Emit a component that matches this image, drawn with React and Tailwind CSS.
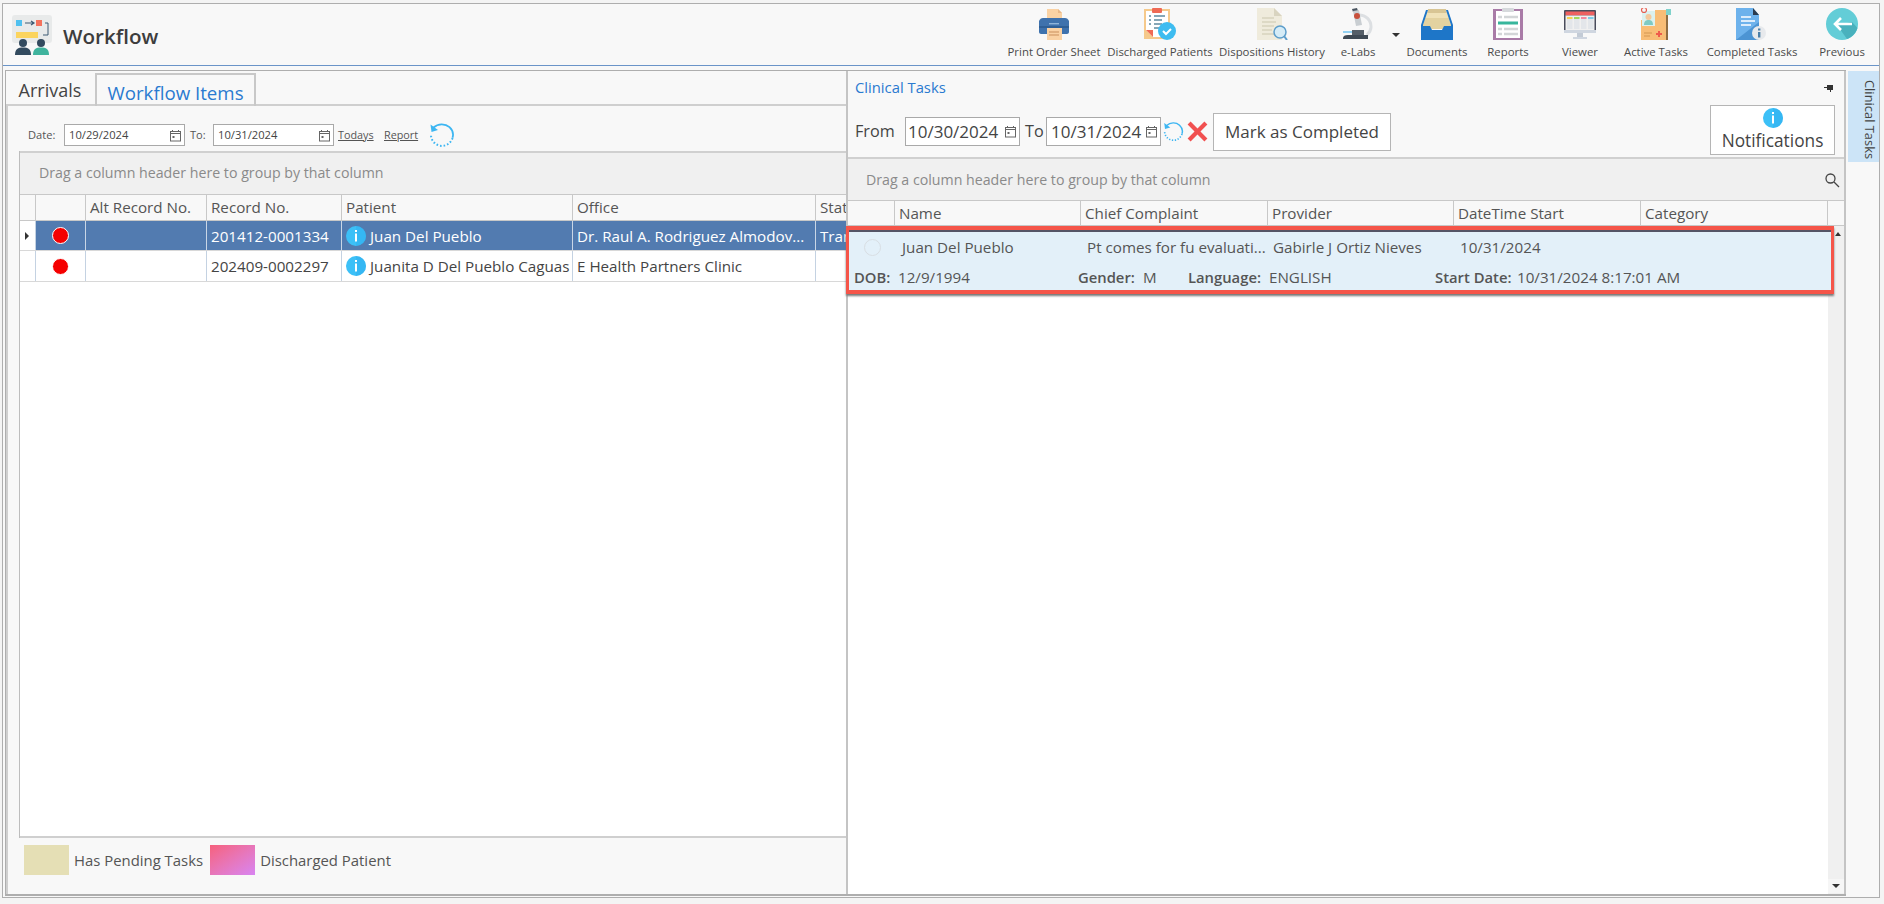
import React from "react";

const Cal = ({ s = 13 }) => (
  <svg width={s} height={s} viewBox="0 0 13 13" fill="none" stroke="#666" strokeWidth="1" className="shrink-0">
    <rect x="1.5" y="2.5" width="10" height="9.5" />
    <path d="M1.5 4.5h10M3.5 1v2M9.5 1v2" />
    <rect x="3.5" y="7" width="2" height="2" fill="#666" stroke="none" />
  </svg>
);

const Refresh = ({ s = 26 }) => (
  <svg width={s} height={s} viewBox="0 0 26 26" fill="none">
    <path d="M4.5 5.5C9 1.5 16 1.2 20.5 5.2c3.2 3 4 7.5 3 10.5" stroke="#3db6f2" strokeWidth="1.8" />
    <path d="M1.5 2.5l1 7.5 6.5-2z" fill="#3db6f2" />
    <path d="M23.6 16C21.5 22 15.5 25 10 23.5 5.5 22.2 2 18 2 13" stroke="#3db6f2" strokeWidth="2" strokeDasharray="1.6 2" />
  </svg>
);

const Info = ({ s = 20 }) => (
  <svg width={s} height={s} viewBox="0 0 20 20" className="shrink-0">
    <circle cx="10" cy="10" r="10" fill="#3cc0f7" />
    <path d="M10 0a10 10 0 0 1 0 20z" fill="#2eaeef" opacity=".5" />
    <rect x="9" y="4" width="2" height="2" fill="#fff" />
    <rect x="9" y="7.5" width="2" height="8" fill="#fff" />
  </svg>
);

const Logo = () => (
  <svg width="40" height="42" viewBox="0 0 40 42">
    <rect x="0" y="0" width="40" height="28" rx="3" fill="#e8eaea" />
    <rect x="4" y="5" width="6" height="6" fill="#4fc0ef" />
    <rect x="24" y="5" width="6" height="6" fill="#f4725c" />
    <path d="M13 8h8M19 6l3 2-3 2" stroke="#3d5a73" strokeWidth="1.2" fill="none" />
    <path d="M33 8h3v12h-5" stroke="#3d5a73" strokeWidth="1" fill="none" />
    <rect x="4" y="17" width="22" height="6" fill="#fbd45e" />
    <circle cx="11" cy="28" r="4" fill="#324a5e" />
    <path d="M3 40c0-6 3-7.500 8-7.500s8 1.500 8 7.500z" fill="#324a5e" />
    <circle cx="29" cy="28" r="4" fill="#324a5e" />
    <path d="M21 40c0-6 3-7.500 8-7.500s8 1.500 8 7.500z" fill="#3fb39d" />
  </svg>
);

const I = {
  print: (
    <svg width="32" height="32" viewBox="0 0 32 32">
      <path d="M9 1h11l4 4v9H9z" fill="#fad2a4" />
      <path d="M20 1l4 4h-4z" fill="#e9b887" />
      <path d="M5 10h22c2 0 3 1 4 3v11c0 1-1 2-2 2H3c-1 0-2-1-2-2V13c1-2 2-3 4-3z" fill="#3f72ad" />
      <rect x="1" y="18" width="30" height="2" fill="#2f5f96" />
      <rect x="11" y="15" width="10" height="1.400" fill="#8fb4da" />
      <rect x="9" y="20" width="15" height="12" fill="#fad2a4" />
      <path d="M11 24h10M11 27h10" stroke="#c98f5d" strokeWidth="1" />
    </svg>
  ),
  disch: (
    <svg width="32" height="32" viewBox="0 0 32 32">
      <rect x="0" y="1" width="26" height="30" fill="#f5c98b" />
      <path d="M2 3h22v26H9l-7-7z" fill="#fff" />
      <path d="M2 22h7v7z" fill="#ef6a55" />
      <rect x="8" y="0" width="10" height="5" rx="1" fill="#ef6a55" />
      <path d="M10 8h11M10 12h8M10 16h8M10 20h5" stroke="#5f8aa0" strokeWidth="1.500" />
      <path d="M5 8h2M5 12h2M5 16h2" stroke="#5f8aa0" strokeWidth="1.500" />
      <circle cx="23" cy="23" r="9" fill="#3ebcf0" />
      <path d="M19 23l3 3 5-5" stroke="#fff" strokeWidth="2" fill="none" />
    </svg>
  ),
  disp: (
    <svg width="32" height="32" viewBox="0 0 32 32">
      <path d="M1 0h17l8 8v24H1z" fill="#efebdc" />
      <path d="M18 0l8 8h-8z" fill="#d9d4c0" />
      <path d="M6 10h12M6 14h14M6 18h12M6 22h10M6 26h14" stroke="#d8d3bd" strokeWidth="1.400" />
      <circle cx="24" cy="24" r="6" fill="#d5ecf7" stroke="#5d9ecb" strokeWidth="1.500" />
      <path d="M28 28l3 4" stroke="#5d9ecb" strokeWidth="2" />
    </svg>
  ),
  labs: (
    <svg width="32" height="32" viewBox="0 0 32 32">
      <path d="M17 7c7 0 12 5 12 12 0 4-2 6-4 8" stroke="#dcdfe2" strokeWidth="3" fill="none" />
      <path d="M10 1l5-1 1 3-5 1z" fill="#4a5560" />
      <path d="M11 3l6-1 3 15-6 1z" fill="#c9ced2" />
      <circle cx="15" cy="8" r="3" fill="#c8503c" />
      <path d="M1 24h10" stroke="#4fb7ee" strokeWidth="1.200" />
      <path d="M6 27h20v4H1v-1c0-2 2-3 5-3z" fill="#3f4a55" />
      <rect x="10" y="22" width="12" height="5" fill="#555f69" />
    </svg>
  ),
  docs: (
    <svg width="32" height="32" viewBox="0 0 32 32">
      <path d="M7 1h18l3 14H4z" fill="#d8c594" />
      <path d="M5 5h22l3 14H2z" fill="#f0e2b8" />
      <path d="M4 10h24l3 11H1z" fill="#e3d2a0" />
      <path d="M5 2h2L2 17v14h28V17L25 2h2l5 15v15H0V17z" fill="#1e76c8" />
      <path d="M0 18h9l2 4h10l2-4h9v14H0z" fill="#1e76c8" />
    </svg>
  ),
  rep: (
    <svg width="32" height="32" viewBox="0 0 32 32">
      <rect x="1" y="1" width="30" height="31" fill="#a97ba7" />
      <rect x="4" y="3" width="24" height="27" fill="#fff" />
      <rect x="10" y="0" width="12" height="4" rx="1" fill="#d6d9dc" />
      <path d="M6 9h4M12 9h14M6 21h4M12 21h14M6 26h4M12 26h14" stroke="#d3d6d8" strokeWidth="2.500" />
      <rect x="6" y="13.500" width="20" height="3" fill="#37b69c" />
    </svg>
  ),
  view: (
    <svg width="32" height="32" viewBox="0 0 32 32">
      <rect x="0" y="2" width="32" height="22" rx="1" fill="#4a4d5c" />
      <rect x="1.500" y="3.500" width="29" height="4" fill="#ef6060" />
      <rect x="1.500" y="7.500" width="29" height="15" fill="#f0f0f0" />
      <path d="M3 9h5.500v12H3zM10 9h5.500v12H10zM17 9h5.500v12H17zM24 9h5.500v12H24z" fill="#e3e6ea" />
      <path d="M3 9h5.500v2H3z" fill="#f8d24f" />
      <path d="M10 9h5.500v2H10z" fill="#a6d75b" />
      <path d="M17 9h5.500v2H17z" fill="#f48aa0" />
      <path d="M24 9h5.500v2H24z" fill="#7dcdea" />
      <rect x="0" y="22" width="32" height="3" fill="#cfd6e0" />
      <rect x="13" y="25" width="6" height="4" fill="#c3cbd6" />
      <rect x="9" y="29" width="14" height="2" fill="#cfd6e0" />
    </svg>
  ),
  act: (
    <svg width="32" height="32" viewBox="0 0 32 32">
      <rect x="1" y="12" width="27" height="20" fill="#f8bd76" />
      <rect x="15" y="2" width="11" height="12" fill="#f8bd76" />
      <rect x="26" y="3" width="2" height="29" fill="#8f6d42" />
      <rect x="26" y="1" width="5" height="6" fill="#7fd2cb" />
      <rect x="2" y="3" width="13" height="15" fill="#dbf1ef" />
      <circle cx="8.500" cy="9" r="3" fill="#f4c99c" />
      <path d="M4 17c0-4 2-5 4.500-5s4.500 1 4.500 5z" fill="#7ecac4" />
      <circle cx="4" cy="2" r="2.500" fill="none" stroke="#e85d50" strokeWidth="1.200" />
      <path d="M16 26h6M19 23v6" stroke="#ef5b4c" strokeWidth="2" />
      <path d="M4 25h8M4 28h6" stroke="#d39650" strokeWidth="1" />
    </svg>
  ),
  comp: (
    <svg width="32" height="32" viewBox="0 0 32 32">
      <path d="M0 0h17l6 7v25H0z" fill="#6db2ec" />
      <path d="M0 32l23-18v18z" fill="#4c94d3" />
      <path d="M17 0l6 7h-6z" fill="#2b3b4d" />
      <path d="M5 9h10M5 13h14M5 17h10" stroke="#fff" strokeWidth="1.500" />
      <circle cx="23" cy="25" r="7" fill="#e7e9ec" />
      <rect x="22" y="20.500" width="2.400" height="2" fill="#4c7fa8" />
      <rect x="22" y="24" width="2.400" height="5.500" fill="#4c7fa8" />
    </svg>
  ),
  prev: (
    <svg width="32" height="32" viewBox="0 0 32 32">
      <circle cx="16" cy="16" r="16" fill="#63cdd7" />
      <path d="M11 17l10 14c5-2 9-6 10.500-11L26 14z" fill="#49b1bd" />
      <path d="M26 16H9M15 10l-6 6 6 6" stroke="#fff" strokeWidth="2.600" fill="none" />
    </svg>
  ),
};

const Tool = ({ w, icon, label }) => (
  <div className={`${w} flex flex-col items-center`}>
    <div className="h-8 w-8">{icon}</div>
    <span className="mt-[4px] text-[11.400px] leading-[16px] whitespace-nowrap text-[#4a4a4a]">{label}</span>
  </div>
);

const DateBox = ({ w, h, v, text, pad }) => (
  <div className={`${w} ${h} ${pad} ${text} flex items-center justify-between border border-[#a9a9a9] bg-white text-[#444]`}>
    <span>{v}</span>
    <Cal />
  </div>
);

const GroupBar = ({ pad, search }) => (
  <div className={`h-[43px] ${pad} flex shrink-0 items-center justify-between border-t-2 border-[#d0d0d0] bg-[#f0f0f0] text-[14.200px] text-[#8a8a8a]`}>
    <span>Drag a column header here to group by that column</span>
    {search && (
      <svg width="16" height="16" viewBox="0 0 16 16" fill="none" stroke="#444" strokeWidth="1.300" className="mr-[4px]">
        <circle cx="6.500" cy="6.500" r="4.500" />
        <path d="M10 10l5 5" />
      </svg>
    )}
  </div>
);

const Head = ({ children, className = "" }) => (
  <div className={`flex items-center overflow-hidden border-r border-[#c8c8c8] pl-[4px] whitespace-nowrap ${className}`}>{children}</div>
);

const Dot = () => (
  <div className="h-[17px] w-[17px] rounded-full border border-white bg-[#f50000]" />
);

const cols = "grid-cols-[16px_50px_121px_135px_231px_243px_100px]";

const Row = ({ sel, h, rec, patient, office, status }) => {
  const cell = `flex items-center overflow-hidden whitespace-nowrap border-r ${sel ? "border-[#c9d6e6] bg-[#527bb0]" : "border-[#c4d2e2]"}`;
  return (
    <div className={`grid ${h} ${cols} border-b border-[#d8d8d8] ${sel ? "text-white" : "text-[#444]"} text-[15.200px]`}>
      <div className="flex items-center justify-center border-r border-[#c4d2e2] bg-white">
        {sel && <div className="ml-[-2px] h-0 w-0 border-y-[4px] border-l-[4px] border-y-transparent border-l-[#333]" />}
      </div>
      <div className={`${cell} justify-center`}><Dot /></div>
      <div className={cell} />
      <div className={`${cell} pt-px pl-[4px]`}>{rec}</div>
      <div className={`${cell} gap-[4px] pl-[4px]`}><Info /><span className="pt-px">{patient}</span></div>
      <div className={`${cell} pt-px pl-[4px]`}>{office}</div>
      <div className={`${cell} pt-px pl-[4px]`}>{status}</div>
    </div>
  );
};

const Legend = ({ swatch, label }) => (
  <div className="flex items-center gap-[5px]">
    <div className={`h-[30px] w-[45px] ${swatch}`} />
    <span className="text-[14.900px] text-[#555]">{label}</span>
  </div>
);

function LeftPanel() {
  return (
    <div className="flex w-[840px] shrink-0 flex-col overflow-hidden">
      <div className="z-10 mb-[-2px] flex h-[35px] shrink-0 items-end pl-px text-[18px] leading-[24px]">
        <div className="flex h-[33px] w-[88px] items-center justify-center pr-[2px] text-[#444]">Arrivals</div>
        <div className="flex h-[33px] w-[161px] items-center justify-center border-x-2 border-t-2 border-[#c8c8c8] pt-[4px] text-[18.700px] text-[#2a7ad0]">Workflow Items</div>
      </div>
      <div className="flex min-h-0 flex-1 flex-col border-t-2 border-l-2 border-[#cfcfcf] pl-[11px]">
        <div className="flex h-[44px] shrink-0 items-center pt-[14px] text-[11.100px] text-[#555]">
          <span className="ml-[9px] w-[36px]">Date:</span>
          <DateBox w="w-[121px]" h="h-[22px]" pad="pl-[4px] pr-[2px]" text="text-[11.200px]" v="10/29/2024" />
          <span className="ml-[5px] w-[23px]">To:</span>
          <DateBox w="w-[121px]" h="h-[22px]" pad="pl-[4px] pr-[2px]" text="text-[11.200px]" v="10/31/2024" />
          <span className="ml-[4px] w-[46px] text-[10.800px] underline">Todays</span>
          <span className="w-[45px] text-[10.800px] underline">Report</span>
          <Refresh />
        </div>
        <div className="mt-[1px] flex min-h-0 flex-1 flex-col border-l border-[#bdbdbd]">
          <GroupBar pad="pl-[19px] pb-[2px]" />
          <div className={`grid h-[27px] shrink-0 ${cols} border-y border-[#c8c8c8] bg-[#f8f8f8] text-[15.200px] text-[#555]`}>
            <Head />
            <Head />
            <Head>Alt Record No.</Head>
            <Head>Record No.</Head>
            <Head>Patient</Head>
            <Head>Office</Head>
            <Head className="border-r-0">Status</Head>
          </div>
          <div className="min-h-0 flex-1 bg-white">
            <Row sel h="h-[30px]" rec="201412-0001334" patient="Juan Del Pueblo" office="Dr. Raul A. Rodriguez Almodov..." status="Transfer" />
            <Row h="h-[31px]" rec="202409-0002297" patient="Juanita D Del Pueblo Caguas" office="E Health Partners Clinic" status="" />
          </div>
          <div className="h-[2px] shrink-0 bg-[#cfcfcf]" />
        </div>
        <div className="flex h-[56px] shrink-0 items-center gap-[7px] pb-[12px] pl-[5px]">
          <Legend swatch="bg-[#e5dfb5]" label="Has Pending Tasks" />
          <Legend swatch="bg-gradient-to-br from-[#f6607c] to-[#d884f2]" label="Discharged Patient" />
        </div>
      </div>
    </div>
  );
}

const THead = ({ w, children }) => (
  <div className={`${w} flex items-center border-r border-[#c8c8c8] pl-[4px]`}>{children}</div>
);

function RightPanel() {
  return (
    <div className="flex min-w-0 flex-1 flex-col border-x-2 border-[#c4c4c4]">
      <div className="flex h-[36px] shrink-0 items-center justify-between pr-[10px] pb-[3px] pl-[7px] text-[14.800px] text-[#2a7ad0]">
        <span>Clinical Tasks</span>
        <svg width="10" height="10" viewBox="0 0 10 10" fill="#333"><path d="M3 2h6v5H3zM0 4h3v1H0zM6 7h1v2H6z" /></svg>
      </div>
      <div className="relative flex h-[50px] shrink-0 items-center pb-[1px] pl-[7px] text-[16.200px] text-[#444]">
        <span className="w-[50px]">From</span>
        <DateBox w="w-[115px]" h="h-[29px]" pad="pl-[2px] pr-[2px]" text="text-[17px]" v="10/30/2024" />
        <span className="w-[26px] pl-[5px]">To</span>
        <DateBox w="w-[115px]" h="h-[29px]" pad="pl-[4px] pr-[2px]" text="text-[17px]" v="10/31/2024" />
        <span className="ml-[2px]"><Refresh s={21} /></span>
        <svg width="21" height="21" viewBox="0 0 20 20" className="ml-[3px]" stroke="#f15050" strokeWidth="4"><path d="M2 2l16 16M18 2L2 18" /></svg>
        <div className="ml-[5px] flex h-[38px] w-[178px] items-center justify-center border border-[#b5b5b5] bg-white text-[17px]">Mark as Completed</div>
        <div className="absolute top-[-2px] right-[9px] flex h-[50px] w-[125px] flex-col items-center border border-[#b5b5b5] bg-white pt-[2px] text-[17.300px] leading-[26px]">
          <Info s={20} />
          Notifications
        </div>
      </div>
      <GroupBar pad="pl-[18px]" search />
      <div className="flex h-[26px] shrink-0 border-y border-[#c8c8c8] bg-[#f8f8f8] text-[15.200px] text-[#555]">
        <THead w="w-[47px]" />
        <THead w="w-[186px]">Name</THead>
        <THead w="w-[187px]">Chief Complaint</THead>
        <THead w="w-[186px]">Provider</THead>
        <THead w="w-[187px]">DateTime Start</THead>
        <THead w="w-[187px]">Category</THead>
        <div className="flex-1" />
      </div>
      <div className="flex min-h-0 flex-1">
        <div className="relative min-w-0 flex-1 bg-white">
          <div className="relative z-10 mr-[-6px] ml-[-2px] h-[68px] border-x-[3px] border-y-[4px] border-[#f55549] bg-[#e3f0f9] text-[15.200px] text-[#555] shadow-[inset_0_2px_0_#556,0_2px_2px_#777]">
            <div className="flex h-[34px] items-center">
              <div className="ml-[15px] h-[17px] w-[17px] shrink-0 rounded-full border border-[#d8dee3]" />
              <span className="ml-[21px] w-[185px] shrink-0">Juan Del Pueblo</span>
              <span className="w-[186px] shrink-0 overflow-hidden whitespace-nowrap">Pt comes for fu evaluati...</span>
              <span className="w-[187px] shrink-0">Gabirle J Ortiz Nieves</span>
              <span>10/31/2024</span>
            </div>
            <div className="flex h-[26px] items-center pl-[5px] whitespace-nowrap">
              <b className="w-[44px] shrink-0 text-[14.800px] font-semibold">DOB:</b>
              <span className="w-[180px] shrink-0">12/9/1994</span>
              <b className="w-[65px] shrink-0 text-[14.800px] font-semibold">Gender:</b>
              <span className="w-[45px] shrink-0">M</span>
              <b className="w-[81px] shrink-0 text-[14.800px] font-semibold">Language:</b>
              <span className="w-[166px] shrink-0">ENGLISH</span>
              <b className="w-[82px] shrink-0 text-[14.800px] font-semibold">Start Date:</b>
              <span>10/31/2024 8:17:01 AM</span>
            </div>
          </div>
        </div>
        <div className="flex w-[16px] shrink-0 flex-col justify-between bg-[#f0f0f0] pb-[1px]">
          <div className="relative z-20 mt-[6px] mr-[3px] ml-auto h-0 w-0 border-x-[3px] border-b-[4px] border-x-transparent border-b-[#333]" />
          <div className="flex h-[14px] items-center justify-center bg-[#f6f6f6]">
            <div className="h-0 w-0 border-x-[4px] border-t-[4px] border-x-transparent border-t-[#333]" />
          </div>
        </div>
      </div>
    </div>
  );
}

export default function App() {
  return (
    <div className="flex h-[904px] w-[1884px] flex-col overflow-hidden bg-[#f4f4f4] pt-[3px] pr-[4px] pb-[6px] pl-[2px] font-['Open_Sans',sans-serif] text-[#444]">
      <div className="flex min-h-0 flex-1 flex-col border border-[#aeaeae] bg-[#f8f8f8]">
        <div className="flex h-[62px] shrink-0 border-b border-[#6a94c8]">
          <div className="ml-[9px] flex items-center pt-[3px]">
            <Logo />
            <span className="ml-[11px] text-[20.600px] font-semibold text-[#3d3d3d]">Workflow</span>
          </div>
          <div className="mr-px ml-auto flex items-start pt-[4px]">
            <Tool w="w-[100px]" icon={I.print} label="Print Order Sheet" />
            <Tool w="w-[112px]" icon={I.disch} label="Discharged Patients" />
            <Tool w="w-[112px]" icon={I.disp} label="Dispositions History" />
            <Tool w="w-[60px]" icon={I.labs} label="e-Labs" />
            <div className="mt-[25px] flex w-[16px] justify-center">
              <div className="h-0 w-0 border-x-[4px] border-t-[4px] border-x-transparent border-t-[#333]" />
            </div>
            <Tool w="w-[66px]" icon={I.docs} label="Documents" />
            <Tool w="w-[76px]" icon={I.rep} label="Reports" />
            <Tool w="w-[68px]" icon={I.view} label="Viewer" />
            <Tool w="w-[84px]" icon={I.act} label="Active Tasks" />
            <Tool w="w-[108px]" icon={I.comp} label="Completed Tasks" />
            <Tool w="w-[72px]" icon={I.prev} label="Previous" />
          </div>
        </div>
        <div className="flex min-h-0 flex-1 pt-[4px] pb-px pl-[2px]">
          <div className="flex min-w-0 flex-1 border-t border-b-2 border-l border-[#aeaeae]">
            <LeftPanel />
            <RightPanel />
          </div>
          <div className="flex w-[33px] shrink-0 justify-end">
            <div className="mt-px flex h-[91px] w-[31px] items-start justify-center bg-[#cce4f7] pt-[6px] text-[12.900px] text-[#444] [writing-mode:vertical-rl]">
              Clinical Tasks
            </div>
          </div>
        </div>
      </div>
    </div>
  );
}
